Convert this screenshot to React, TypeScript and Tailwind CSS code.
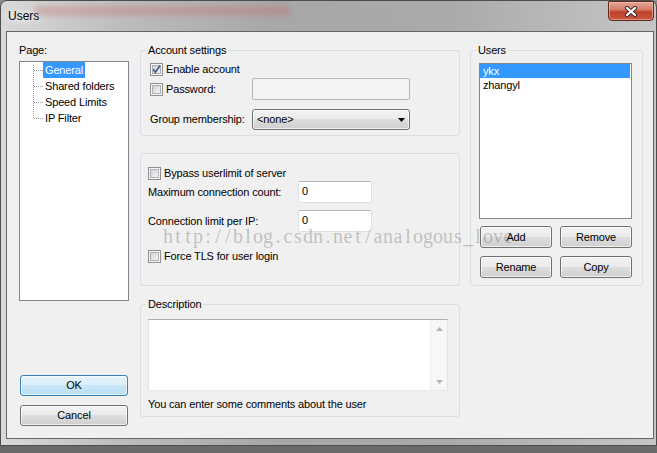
import React from "react";

function Check({ checked }: { checked?: boolean }) {
  return (
    <div className="relative w-[13px] h-[13px] shrink-0 border border-[#8e8f8f] bg-[#f6f6f6] p-[1px]">
      <div className="w-full h-full border border-[#aeb2b8] bg-[linear-gradient(135deg,#cfd3d8,#f4f4f4)]" />
      {checked && (
        <svg className="absolute left-0 top-0" width="11" height="11" viewBox="0 0 11 11">
          <path d="M2.2 5.4 L4.4 8.2 L8.9 1.8" stroke="#4c5f8a" strokeWidth="1.8" fill="none" />
        </svg>
      )}
    </div>
  );
}

function Btn({ children }: { children: React.ReactNode }) {
  return (
    <div className="h-[22px] w-[72px] rounded-[3px] border border-[#707070] bg-[linear-gradient(#f2f2f2,#ebebeb_50%,#dddddd_50%,#cfcfcf)] shadow-[inset_0_0_0_1px_rgba(255,255,255,0.7)] flex items-center justify-center">
      {children}
    </div>
  );
}

function NumInput() {
  return (
    <div className="w-[74px] h-[22px] bg-white border border-[#dde1e7] border-t-[#b5b8bf] rounded-[2px] pl-[3px] pt-[3px] leading-[13px]">
      0
    </div>
  );
}

const WATERMARK = "http://blog.csdn.net/analogous_love";

export default function App() {
  return (
    <div className="w-[657px] h-[453px] bg-[linear-gradient(#8a8a8a,#6a6a6a)] relative overflow-hidden font-['Liberation_Sans',Arial,sans-serif] text-black text-[11px] leading-[13px] tracking-[-0.15px]">
      <div className="h-[446px] rounded-t-[7px] border border-[#4d4d4d] bg-[linear-gradient(90deg,#d9d9d9,#bdbdbd_18%,#a7a7a7_42%,#aaaaaa_68%,#c5c5c5)] flex flex-col">
        {/* title bar */}
        <div className="h-[30px] shrink-0 flex items-start justify-between pl-[7px] pr-[2px] relative">
          <div className="mt-[8px] text-[12px] leading-[15px] tracking-normal [text-shadow:0_0_6px_#ffffff,0_0_10px_#ffffff]">Users</div>
          <div className="absolute left-[33px] top-[5px] w-[256px] h-[10px] rounded-[4px] bg-[#c86a6a]/30 blur-[2px]" />
          <div className="w-[46px] h-[20px] rounded-b-[4px] rounded-t-[1px] border border-[#5e2a22] bg-[linear-gradient(#e3a797,#d5806c_40%,#c0432c_55%,#cb563e)] shadow-[inset_0_0_0_1px_rgba(255,200,190,0.5)] flex items-center justify-center">
            <svg width="14" height="11" viewBox="0 0 14 11">
              <path d="M3 2 L11 9 M11 2 L3 9" stroke="#3a2a28" strokeWidth="4.2" strokeLinecap="round" />
              <path d="M3 2 L11 9 M11 2 L3 9" stroke="#ffffff" strokeWidth="2.3" strokeLinecap="round" />
            </svg>
          </div>
        </div>

        {/* client area */}
        <div className="flex-1 pl-[5px] pr-[2px] pb-[6px]">
          <div className="h-full border border-[#666666] bg-[#f0f0f0] flex items-start pt-[12px] pl-[12px]">
            {/* left column */}
            <div className="w-[110px] flex flex-col">
              <div className="h-[13px]">Page:</div>
              <div className="mt-[4px] h-[240px] border border-[#828790] bg-white relative">
                <svg className="absolute left-0 top-0" width="30" height="60" shapeRendering="crispEdges">
                  <path d="M13.5 3 V57" stroke="#9a9a9a" strokeWidth="1" strokeDasharray="1 1" />
                  <path d="M14 8.5 H23 M14 24.5 H23 M14 40.5 H23 M14 56.5 H23" stroke="#9a9a9a" strokeWidth="1" strokeDasharray="1 1" />
                </svg>
                <div className="flex flex-col pl-[23px]">
                  <div className="h-[16px] flex">
                    <span className="px-[2px] h-full flex items-center bg-[#3399ff] text-white">General</span>
                  </div>
                  <div className="h-[16px] flex items-center px-[2px]">Shared folders</div>
                  <div className="h-[16px] flex items-center px-[2px]">Speed Limits</div>
                  <div className="h-[16px] flex items-center px-[2px]">IP Filter</div>
                </div>
              </div>
              <div className="mt-[74px] ml-[1px] w-[108px] h-[21px] rounded-[3px] border border-[#3c7fb1] bg-[linear-gradient(#e7f4fc,#d9eefa_50%,#c8e6f7_50%,#b9dff4)] shadow-[inset_0_0_0_1px_rgba(255,255,255,0.6)] flex items-center justify-center">
                OK
              </div>
              <div className="mt-[9px] ml-[1px] w-[108px] h-[21px] rounded-[3px] border border-[#707070] bg-[linear-gradient(#f2f2f2,#ebebeb_50%,#dddddd_50%,#cfcfcf)] shadow-[inset_0_0_0_1px_rgba(255,255,255,0.7)] flex items-center justify-center">
                Cancel
              </div>
            </div>

            {/* middle column */}
            <div className="ml-[11px] w-[320px] flex flex-col">
              <fieldset className="border border-[#d5dfe5] rounded-[3px] pb-[5px]">
                <legend className="ml-[5px] px-[2px] leading-[13px]">Account settings</legend>
                <div className="pl-[9px] flex flex-col">
                  <div className="mt-[5px] h-[14px] flex items-center">
                    <Check checked />
                    <span className="ml-[3px]">Enable account</span>
                  </div>
                  <div className="mt-[2px] h-[22px] flex items-center">
                    <div className="w-[102px] flex items-center">
                      <Check />
                      <span className="ml-[3px]">Password:</span>
                    </div>
                    <div className="w-[158px] h-[22px] border border-[#b4b8bc] bg-[#f3f3f3] rounded-[2px]" />
                  </div>
                  <div className="mt-[9px] h-[21px] flex items-center">
                    <span className="w-[102px]">Group membership:</span>
                    <div className="w-[158px] h-[21px] rounded-[3px] border border-[#707070] bg-[linear-gradient(#f2f2f2,#ebebeb_50%,#dddddd_50%,#cfcfcf)] shadow-[inset_0_0_0_1px_rgba(255,255,255,0.7)] flex items-center justify-between pl-[4px] pr-[4px]">
                      <span>&lt;none&gt;</span>
                      <svg width="7" height="4" viewBox="0 0 7 4">
                        <path d="M0 0 H7 L3.5 4 Z" fill="#000" />
                      </svg>
                    </div>
                  </div>
                </div>
              </fieldset>

              <div className="mt-[17px] border border-[#d5dfe5] rounded-[3px] pl-[7px] pb-[22px] flex flex-col">
                <div className="mt-[12px] h-[14px] flex items-center">
                  <Check />
                  <span className="ml-[3px]">Bypass userlimit of server</span>
                </div>
                <div className="mt-[1px] h-[22px] flex items-center">
                  <span className="w-[150px]">Maximum connection count:</span>
                  <NumInput />
                </div>
                <div className="mt-[7px] h-[22px] flex items-center">
                  <span className="w-[150px]">Connection limit per IP:</span>
                  <NumInput />
                </div>
                <div className="mt-[17px] h-[14px] flex items-center">
                  <Check />
                  <span className="ml-[3px]">Force TLS for user login</span>
                </div>
              </div>

              <fieldset className="mt-[12px] border border-[#d5dfe5] rounded-[3px] pb-[5px]">
                <legend className="ml-[5px] px-[2px] leading-[13px]">Description</legend>
                <div className="pl-[7px] flex flex-col">
                  <div className="mt-[8px] w-[300px] h-[72px] bg-white border border-[#e2e3ea] border-t-[#abadb3] border-b-[#e3e9ef] flex">
                    <div className="flex-1" />
                    <div className="w-[17px] h-full bg-[#f7f7f7] border-l border-[#ececec] flex flex-col justify-between">
                      <div className="h-[17px] flex items-center justify-center">
                        <svg width="7" height="4" viewBox="0 0 7 4">
                          <path d="M0 4 H7 L3.5 0 Z" fill="#b4b4b4" />
                        </svg>
                      </div>
                      <div className="h-[17px] flex items-center justify-center">
                        <svg width="7" height="4" viewBox="0 0 7 4">
                          <path d="M0 0 H7 L3.5 4 Z" fill="#b4b4b4" />
                        </svg>
                      </div>
                    </div>
                  </div>
                  <div className="mt-[7px] h-[13px]">You can enter some comments about the user</div>
                </div>
              </fieldset>
            </div>

            {/* right column */}
            <fieldset className="ml-[10px] w-[173px] border border-[#d5dfe5] rounded-[3px] pb-[7px]">
              <legend className="ml-[5px] px-[2px] leading-[13px]">Users</legend>
              <div className="pl-[8px] flex flex-col">
                <div className="mt-[6px] w-[153px] h-[156px] border border-[#828790] bg-white">
                  <div className="h-[14px] mr-[1px] bg-[#3399ff] text-white pl-[3px] leading-[14px]">ykx</div>
                  <div className="h-[14px] pl-[3px] leading-[14px]">zhangyl</div>
                </div>
                <div className="mt-[7px] ml-[1px] flex gap-[8px]">
                  <Btn>Add</Btn>
                  <Btn>Remove</Btn>
                </div>
                <div className="mt-[8px] ml-[1px] flex gap-[8px]">
                  <Btn>Rename</Btn>
                  <Btn>Copy</Btn>
                </div>
              </div>
            </fieldset>
          </div>
        </div>
      </div>

      {/* watermark */}
      <div className="absolute left-[163px] top-[226px] flex whitespace-nowrap pointer-events-none tracking-normal font-['Liberation_Serif','Times_New_Roman',serif] text-[20px] leading-[20px] text-[#64646459]">
        {WATERMARK.split("").map((c, i) => (
          <span key={i} className="inline-block w-[10px] text-center">
            {c}
          </span>
        ))}
      </div>
    </div>
  );
}
